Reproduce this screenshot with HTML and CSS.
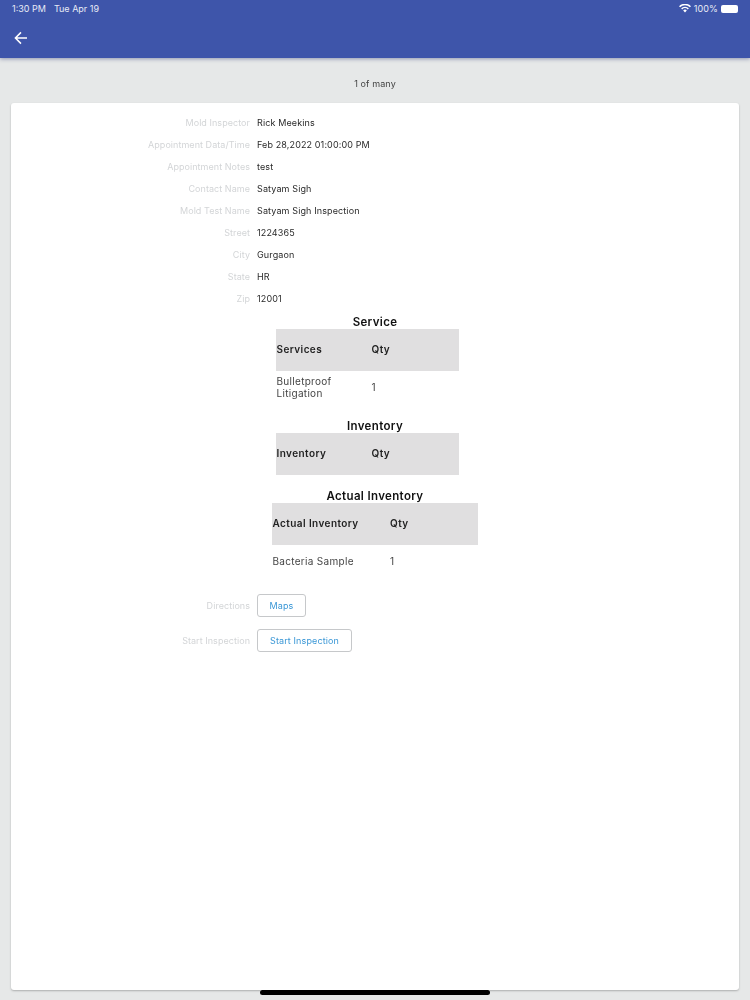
FILE: index.html
```html
<!DOCTYPE html>
<html lang="en">
<head>
<meta charset="utf-8">
<title>Inspection</title>
<link rel="stylesheet" href="styles.css">
</head>
<body>
<header class="appbar">
  <div class="status">
    <div class="status-left"><span>1:30 PM</span><span>Tue Apr 19</span></div>
    <div class="status-right">
      <svg class="wifi" viewBox="0 0 14 10" width="12" height="9"><path d="M7 9.6 4.9 7.3a3 3 0 0 1 4.2 0zM3.7 6.1 2.5 4.8a6.4 6.4 0 0 1 9 0l-1.2 1.3a4.7 4.7 0 0 0-6.6 0zM1.3 3.6 0 2.3a9.9 9.9 0 0 1 14 0l-1.3 1.3a8.1 8.1 0 0 0-11.4 0z" fill="#fff"/></svg>
      <span>100%</span>
      <span class="battery"></span>
    </div>
  </div>
  <div class="toolbar">
    <svg class="back" viewBox="0 0 14 14" width="14" height="14"><path d="M13 7H1.6M7 1.4 1.4 7 7 12.6" fill="none" stroke="#fff" stroke-width="1.5"/></svg>
  </div>
</header>
<div class="pager">1 of many</div>
<main class="card">
  <div class="fields">
    <div class="field"><span class="label">Mold Inspector</span><span class="value">Rick Meekins</span></div>
    <div class="field"><span class="label">Appointment Data/Time</span><span class="value">Feb 28,2022 01:00:00 PM</span></div>
    <div class="field"><span class="label">Appointment Notes</span><span class="value">test</span></div>
    <div class="field"><span class="label">Contact Name</span><span class="value">Satyam Sigh</span></div>
    <div class="field"><span class="label">Mold Test Name</span><span class="value">Satyam Sigh Inspection</span></div>
    <div class="field"><span class="label">Street</span><span class="value">1224365</span></div>
    <div class="field"><span class="label">City</span><span class="value">Gurgaon</span></div>
    <div class="field"><span class="label">State</span><span class="value">HR</span></div>
    <div class="field"><span class="label">Zip</span><span class="value">12001</span></div>
  </div>

  <section class="block block-service">
    <h2 class="block-title">Service</h2>
    <div class="grid grid-small">
      <div class="grid-head"><span>Services</span><span>Qty</span></div>
      <div class="grid-row"><span>Bulletproof<br>Litigation</span><span>1</span></div>
    </div>
  </section>

  <section class="block block-inventory">
    <h2 class="block-title">Inventory</h2>
    <div class="grid grid-small">
      <div class="grid-head"><span>Inventory</span><span>Qty</span></div>
    </div>
  </section>

  <section class="block block-actual">
    <h2 class="block-title">Actual Inventory</h2>
    <div class="grid grid-large">
      <div class="grid-head"><span>Actual Inventory</span><span>Qty</span></div>
      <div class="grid-row"><span>Bacteria Sample</span><span>1</span></div>
    </div>
  </section>

  <div class="actions">
    <div class="field action-maps"><span class="label">Directions</span><button class="btn btn-maps" type="button">Maps</button></div>
    <div class="field action-start"><span class="label">Start Inspection</span><button class="btn btn-start" type="button">Start Inspection</button></div>
  </div>
</main>
<div class="home-indicator"></div>
</body>
</html>
```

FILE: styles.css
```css
* { box-sizing: border-box; }
html, body { margin: 0; padding: 0; }
body {
  width: 750px;
  height: 1000px;
  overflow: hidden;
  position: relative;
  background: #e6e8e8;
  font-family: Inter, "Liberation Sans", sans-serif;
  font-size: 9px;
  letter-spacing: 0.12px;
  color: #333;
}
.appbar {
  height: 58px;
  background: #3e55aa;
  box-shadow: 0 1px 4px rgba(40, 50, 110, 0.45);
  color: #e8ebf6;
}
.status {
  height: 18px;
  padding: 3px 11px 0 12px;
  display: flex;
  justify-content: space-between;
  align-items: flex-start;
  line-height: 11px;
}
.status-left { display: flex; gap: 8px; letter-spacing: 0; }
.status-right { display: flex; align-items: center; gap: 3px; height: 11px; }
.wifi { display: block; }
.battery {
  width: 17px;
  height: 8px;
  border-radius: 2px;
  background: #fff;
  display: block;
  margin-right: 1px;
}
.toolbar { height: 40px; padding: 13px 0 0 14px; }
.back { display: block; }
.pager {
  height: 45px;
  padding-top: 5px;
  display: flex;
  align-items: center;
  justify-content: center;
  color: #444;
  will-change: transform;
}
.card {
  margin: 0 11px;
  height: 887px;
  background: #fff;
  border-radius: 3px;
  box-shadow: 0 1px 2px rgba(0, 0, 0, 0.25);
  padding-top: 8px;
  will-change: transform;
}
.field {
  display: flex;
  align-items: center;
  gap: 7px;
  height: 22px;
}
.label {
  width: 239px;
  text-align: right;
  color: #d3d5d7;
  white-space: nowrap;
  letter-spacing: 0.05px;
}
.value { color: #2a2a2a; white-space: nowrap; }
.block { display: flex; flex-direction: column; align-items: center; }
.block-title {
  margin: 0;
  font-size: 11.5px;
  font-weight: 600;
  letter-spacing: 0.35px;
  line-height: 14px;
  color: #111;
}
.block-service { margin-top: 6px; }
.block-inventory { margin-top: 16px; }
.block-actual { margin-top: 14px; }
.grid { font-size: 10px; line-height: 12px; color: #444; letter-spacing: 0.3px; }
.grid-small { width: 183px; margin-right: 15px; }
.grid-large { width: 206px; }
.grid-head, .grid-row { display: grid; align-items: center; padding-left: 0.5px; }
.grid-small .grid-head, .grid-small .grid-row { grid-template-columns: 95px 1fr; }
.grid-large .grid-head, .grid-large .grid-row { grid-template-columns: 117.5px 1fr; }
.grid-head {
  height: 42px;
  padding-bottom: 2px;
  background: #e0dfe0;
  font-weight: 600;
  letter-spacing: 0.42px;
  color: #222;
}
.grid-row { height: 32px; }
.actions { margin-top: 17px; }
.action-maps { height: 23px; }
.action-start { height: 23px; margin-top: 12px; }
.btn {
  height: 23px;
  padding: 0;
  background: #fff;
  border: 1px solid #c6c8ca;
  border-radius: 3px;
  color: #3a97d6;
  font: inherit;
  letter-spacing: inherit;
}
.btn-maps { width: 49px; }
.btn-start { width: 95px; }
.home-indicator {
  position: absolute;
  left: 260px;
  top: 990px;
  width: 230px;
  height: 5px;
  border-radius: 2.5px;
  background: #000;
}
```
